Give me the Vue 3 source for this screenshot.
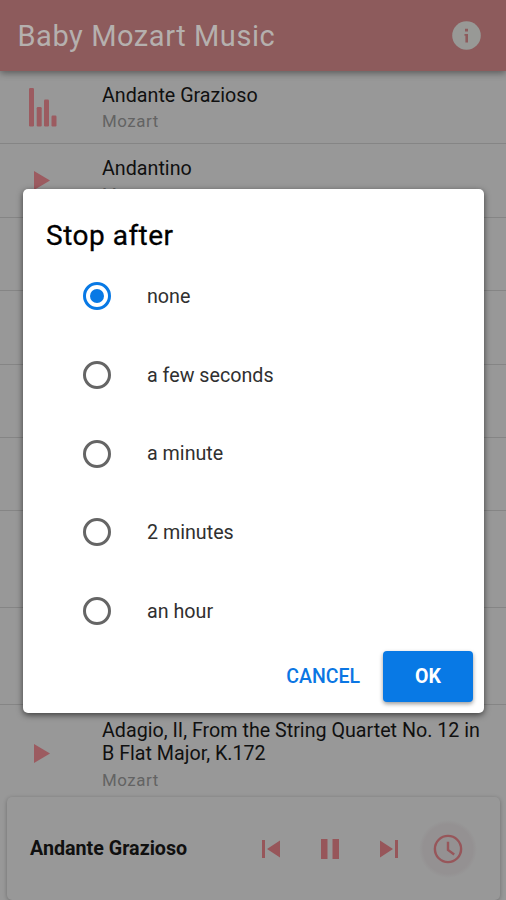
<script setup>
import { ref } from 'vue'

const tracks = [
  { title: 'Andante Grazioso', artist: 'Mozart', playing: true, size: 'first' },
  { title: 'Andantino', artist: 'Mozart', size: 'second' },
  { size: 'single' },
  { size: 'single' },
  { size: 'single' },
  { size: 'single' },
  { size: 'double' },
  { size: 'double' },
  { title: 'Adagio, II, From the String Quartet No. 12 in B Flat Major, K.172', artist: 'Mozart', size: 'last' },
]
const options = ['none', 'a few seconds', 'a minute', '2 minutes', 'an hour']
const selected = ref('none')
</script>

<template>
  <div class="screen">
    <header class="toolbar">
      <h1>Baby Mozart Music</h1>
      <svg class="info" viewBox="0 0 29 29">
        <circle cx="14.5" cy="14.5" r="14.3" fill="#989996" />
        <path d="M13 7.8h3v2.600h-3zM12.500 13h3.500v8.400h-2.600v-6.600h-.9z" fill="#8d5b5c" />
      </svg>
    </header>

    <main class="list">
      <div v-for="(track, i) in tracks" :key="i" class="row" :class="track.size">
        <template v-if="track.title">
          <svg v-if="track.playing" class="bars" viewBox="0 0 28 39">
            <rect x="0" y="0" width="5" height="38.500" rx="1.200" />
            <rect x="7.700" y="19" width="5" height="19.500" rx="1.200" />
            <rect x="15" y="11.500" width="5" height="27" rx="1.200" />
            <rect x="22.500" y="27.500" width="5" height="11" rx="1.200" />
          </svg>
          <svg v-else class="play" viewBox="0 0 16 19"><path d="M0 0v19l16-9.500z" /></svg>
          <div class="text">
            <div class="title">{{ track.title }}</div>
            <div class="artist">{{ track.artist }}</div>
          </div>
        </template>
      </div>
    </main>

    <footer class="player">
      <div class="now">Andante Grazioso</div>
      <svg class="skip" viewBox="0 0 18 18"><path d="M0 0h3v18H0zM18 .5v17L5 9z" /></svg>
      <svg class="pause" viewBox="0 0 18 20"><path d="M0 0h6.500v20H0zM11.500 0H18v20h-6.500z" /></svg>
      <svg class="skip" viewBox="0 0 18 18"><path d="M15 0h3v18h-3zM0 .5v17L13 9z" /></svg>
      <div class="timer">
        <svg viewBox="0 0 30 30">
          <circle cx="15" cy="15" r="13.100" />
          <path d="M15 7.800v8.200l6.200 4.400" />
        </svg>
      </div>
    </footer>

    <section class="dialog" role="dialog">
      <h2>Stop after</h2>
      <div class="options">
        <div v-for="option in options" :key="option" class="option" @click="selected = option">
          <span class="radio" :class="{ on: selected === option }"></span>
          <span class="label">{{ option }}</span>
        </div>
      </div>
      <div class="actions">
        <button class="cancel">CANCEL</button>
        <button class="ok">OK</button>
      </div>
    </section>
  </div>
</template>

<style>
body { margin: 0; background: #989898; }
</style>

<style scoped>
.screen {
  position: relative;
  width: 506px;
  height: 900px;
  overflow: hidden;
  background: #989898;
  font-family: Roboto, sans-serif;
  color: #101010;
}
svg { display: block; flex: none; }
.toolbar {
  position: relative;
  box-sizing: border-box;
  height: 71px;
  padding: 0 25px 0 17.500px;
  display: flex;
  align-items: center;
  justify-content: space-between;
  background: #8d5b5c;
  box-shadow: 0 2px 7px rgba(0, 0, 0, .42);
}
h1 { margin: 0; font-size: 29px; font-weight: 400; letter-spacing: .55px; color: #b5b0ae; }
.info { width: 29px; height: 29px; }
.row {
  box-sizing: border-box;
  display: flex;
  align-items: flex-start;
  border-bottom: 1px solid #858585;
}
.first { height: 73px; }
.second { height: 73.800px; }
.single { height: 73.400px; }
.double { height: 96.600px; }
.last { height: 97px; padding-right: 18px; border-bottom: 0; }
.bars { width: 28px; height: 39px; margin: 17px 45px 0 29px; fill: #9c5b60; }
.play { width: 16px; height: 19px; margin: 27px 52px 0 34px; fill: #9c5b60; }
.last .play { margin-top: 39px; }
.text { padding-top: 13px; }
.title { font-size: 19.700px; line-height: 23px; }
.artist { margin-top: 3px; font-size: 16.900px; line-height: 22px; letter-spacing: .55px; color: #636363; }
.last .text { padding-top: 14px; }
.last .artist { margin-top: 4px; }
.player {
  position: absolute;
  left: 7px;
  top: 797px;
  width: 493px;
  height: 103px;
  box-sizing: border-box;
  padding-left: 23px;
  display: flex;
  align-items: center;
  background: #989898;
  border-radius: 5px;
  box-shadow: 0 1px 4px rgba(0, 0, 0, .28);
}
.player svg { fill: #97565a; }
.now { width: 231.500px; font-size: 19.700px; font-weight: 700; white-space: nowrap; }
.skip { width: 18px; height: 18px; }
.pause { width: 18px; height: 20px; margin: 0 41px; }
.timer {
  width: 58px;
  height: 58px;
  margin-left: 21px;
  display: flex;
  align-items: center;
  justify-content: center;
  border-radius: 50%;
  background: radial-gradient(closest-side, #949192 85%, #989898);
}
.player .timer svg { width: 30px; height: 30px; fill: none; stroke: #97565a; stroke-width: 2.400px; }
.dialog {
  position: absolute;
  left: 23px;
  top: 189px;
  width: 461px;
  height: 524px;
  box-sizing: border-box;
  display: flex;
  flex-direction: column;
  background: #fff;
  border-radius: 5px;
  box-shadow: 0 2px 6px rgba(0, 0, 0, .6);
}
h2 {
  margin: 0;
  padding: 29px 23px 0;
  font-size: 28px;
  line-height: 36px;
  font-weight: 400;
  letter-spacing: .5px;
  color: #000;
  -webkit-text-stroke: .3px #000;
}
.options { padding: 3px 0 0 60px; }
.option { height: 78.700px; display: flex; align-items: center; }
.radio {
  box-sizing: border-box;
  width: 28px;
  height: 28px;
  margin-right: 36px;
  display: flex;
  align-items: center;
  justify-content: center;
  border: 3px solid #656565;
  border-radius: 50%;
}
.radio.on { border-color: #0879e5; }
.radio.on::after { content: ''; width: 14px; height: 14px; border-radius: 50%; background: #0879e5; }
.label { font-size: 19.700px; color: #303030; }
.actions { margin: auto 11px 11px 0; display: flex; justify-content: flex-end; align-items: center; }
button { padding: 0; border: 0; background: none; font: 500 19.500px Roboto, sans-serif; }
.cancel { margin-right: 23px; color: #0b76e3; }
.ok {
  width: 90px;
  height: 51px;
  border-radius: 4px;
  background: #0879e5;
  color: #fff;
  font-weight: 700;
  box-shadow: 0 2px 4px rgba(0, 0, 0, .4);
}
</style>
